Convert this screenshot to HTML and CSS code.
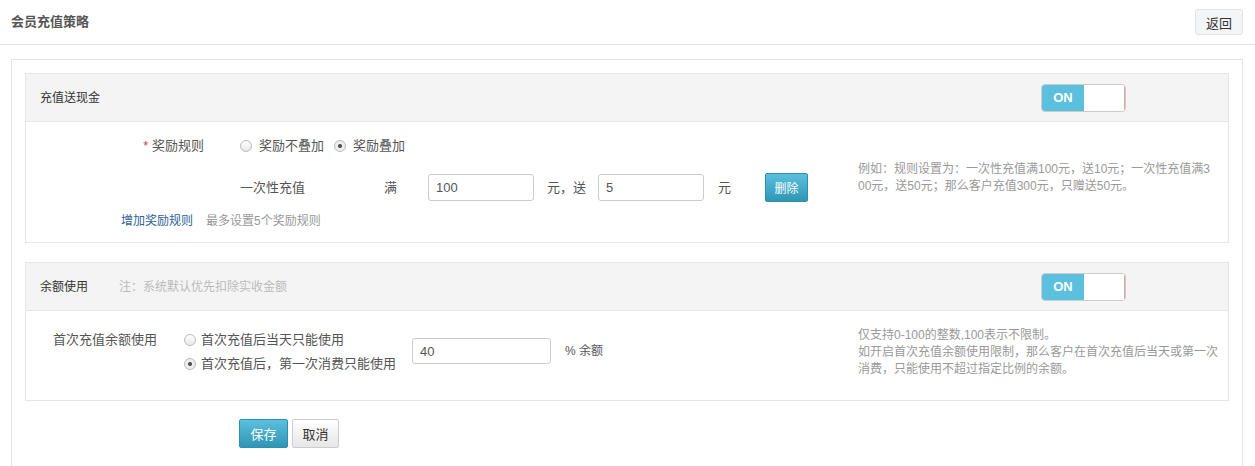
FILE: index.html
```html
<!DOCTYPE html>
<html lang="zh-CN">
<head>
    <meta charset="UTF-8">
    <title>会员充值策略</title>
    <link rel="stylesheet" href="styles.css">
</head>
<body>
    <div class="page-header">
        <h1 class="page-title">会员充值策略</h1>
        <button class="btn-back">返回</button>
    </div>

    <div class="panel">
        <!-- 充值送现金 -->
        <div class="card">
            <div class="card-header">
                <span class="card-title">充值送现金</span>
                <div class="switch"><span class="switch-on">ON</span><span class="switch-off"></span></div>
            </div>
            <div class="card-body">
                <div class="form-area">
                    <div class="row row-rule">
                        <label class="rule-label"><em>*</em> 奖励规则</label>
                        <label class="radio"><i></i>奖励不叠加</label>
                        <label class="radio checked"><i></i>奖励叠加</label>
                    </div>
                    <div class="row row-item">
                        <span class="item-name">一次性充值</span>
                        <span class="item-full">满</span>
                        <input class="input input-amount" type="text" value="100">
                        <span class="item-text">元，送</span>
                        <input class="input input-amount" type="text" value="5">
                        <span class="item-unit">元</span>
                        <button class="btn btn-primary btn-delete">删除</button>
                    </div>
                    <div class="row row-add">
                        <a class="link-add">增加奖励规则</a>
                        <span class="hint">最多设置5个奖励规则</span>
                    </div>
                </div>
                <div class="tip tip-rule">例如：规则设置为：一次性充值满100元，送10元；一次性充值满300元，送50元；那么客户充值300元，只赠送50元。</div>
            </div>
        </div>

        <!-- 余额使用 -->
        <div class="card">
            <div class="card-header">
                <span class="card-title">余额使用</span>
                <span class="card-note">注：系统默认优先扣除实收金额</span>
                <div class="switch"><span class="switch-on">ON</span><span class="switch-off"></span></div>
            </div>
            <div class="card-body">
                <div class="form-area balance-area">
                    <label class="balance-label">首次充值余额使用</label>
                    <div class="radio-list">
                        <label class="radio"><i></i>首次充值后当天只能使用</label>
                        <label class="radio checked"><i></i>首次充值后，第一次消费只能使用</label>
                    </div>
                    <input class="input input-percent" type="text" value="40">
                    <span class="percent-unit">% 余额</span>
                </div>
                <div class="tip tip-balance">
                    <div>仅支持0-100的整数,100表示不限制。</div>
                    <div>如开启首次充值余额使用限制，那么客户在首次充值后当天或第一次消费，只能使用不超过指定比例的余额。</div>
                </div>
            </div>
        </div>

        <div class="actions">
            <button class="btn btn-primary btn-save">保存</button>
            <button class="btn btn-default btn-cancel">取消</button>
        </div>
    </div>
</body>
</html>
```

FILE: styles.css
```css
/* Reset */
body, h1, div, span, button, input, label, a {
    margin: 0;
    padding: 0;
    font-family: "Liberation Sans", "Noto Sans CJK SC", sans-serif;
    box-sizing: border-box;
}

body {
    background-color: #ffffff;
    color: #555;
    font-size: 13px;
    line-height: 20px;
}

/* Page header */
.page-header {
    height: 45px;
    padding: 0 12px 0 11px;
    display: flex;
    align-items: center;
    justify-content: space-between;
    border-bottom: 1px solid #e5e5e5;
}

.page-title {
    font-size: 13px;
    font-weight: bold;
    color: #555;
    line-height: 20px;
    margin-top: -1px;
}

.btn-back {
    width: 48px;
    height: 26px;
    font-size: 13px;
    color: #333;
    background-color: #f4f5f7;
    border: 1px solid #e1e2e5;
    border-radius: 3px;
}

/* Outer panel */
.panel {
    margin: 14px 12px 0 11px;
    padding: 13px 13px 20px;
    border: 1px solid #e5e5e5;
    border-bottom: none;
}

/* Cards */
.card {
    border: 1px solid #e6e6e6;
    margin-bottom: 19px;
}

.card-header {
    height: 48px;
    display: flex;
    align-items: center;
    padding-left: 14px;
    background-color: #f4f4f4;
    border-bottom: 1px solid #e6e6e6;
}

.card-title {
    font-size: 12px;
    color: #333;
}

.card-note {
    font-size: 12px;
    color: #bbb;
    margin-left: 31px;
}

/* Switch */
.switch {
    margin-left: auto;
    margin-right: 102px;
    width: 85px;
    height: 28px;
    display: flex;
    border: 1px solid #ccc;
    border-radius: 4px;
    overflow: hidden;
}

.switch-on {
    width: 42px;
    background-color: #5bc0de;
    color: #fff;
    font-size: 13px;
    font-weight: bold;
    line-height: 26px;
    text-align: center;
}

.switch-off {
    flex: 1;
    background-color: #fff;
    border-right: 1px solid #e3a5a3;
}

/* Card body */
.card-body {
    display: flex;
}

.form-area {
    width: 832px;
}

.row {
    display: flex;
    align-items: center;
}

.row-rule {
    margin-top: 12px;
    height: 24px;
}

.rule-label {
    width: 178px;
    text-align: right;
    margin-right: 36px;
}

.rule-label em {
    font-style: normal;
    color: #e4393c;
}

.radio {
    display: inline-flex;
    align-items: center;
    color: #555;
}

.radio i {
    width: 10px;
    height: 10px;
    border: 1px solid #bbb;
    border-radius: 50%;
    background: linear-gradient(#ffffff, #e8e8e8);
    margin-right: 7px;
}

.radio.checked i {
    background: radial-gradient(circle, #555 0, #555 1.6px, #eee 2.4px);
}

.row-rule .radio + .radio {
    margin-left: 10px;
}

.row-item {
    margin-top: 15px;
    height: 29px;
    padding-left: 214px;
}

.item-name {
    width: 144px;
}

.item-full {
    width: 44px;
}

.input {
    height: 27px;
    border: 1px solid #ccc;
    border-radius: 3px;
    padding: 0 7px;
    font-size: 13px;
    color: #555;
    background-color: #fff;
}

.input-amount {
    width: 106px;
}

.item-text {
    margin: 0 12px 0 13px;
}

.item-unit {
    margin-left: 14px;
    margin-right: 34px;
}

/* Buttons */
.btn {
    height: 29px;
    font-size: 13px;
    border-radius: 2px;
}

.btn-primary {
    color: #fff;
    background: linear-gradient(#5bc0de, #2f96b4);
    border: 1px solid #2f8fae;
}

.btn-default {
    color: #333;
    background: linear-gradient(#ffffff, #e6e6e6);
    border: 1px solid #ccc;
}

.btn-delete {
    width: 43px;
    font-size: 12px;
}

.row-add {
    margin-top: 9px;
    margin-bottom: 11px;
    padding-left: 95px;
    font-size: 12px;
}

.link-add {
    color: #2d6494;
    margin-right: 13px;
}

.hint {
    color: #999;
}

/* Tips on the right */
.tip {
    width: 355px;
    font-size: 12px;
    line-height: 17px;
    color: #999;
    word-break: break-all;
}

.tip-rule {
    margin-top: 39px;
}

.tip-balance {
    width: 364px;
    margin-top: 16px;
}

/* Balance row */
.balance-area {
    display: flex;
    align-items: flex-start;
    padding-top: 17px;
    padding-bottom: 24px;
}

.balance-label {
    width: 131px;
    text-align: right;
    line-height: 24px;
    margin-right: 27px;
}

.radio-list {
    width: 228px;
    display: flex;
    flex-direction: column;
}

.radio-list .radio {
    line-height: 24px;
}

.radio-list .radio i {
    margin-right: 5px;
}

.input-percent {
    width: 139px;
    height: 26px;
    margin-top: 10px;
}

.percent-unit {
    margin-left: 14px;
    margin-top: 13px;
    font-size: 12px;
}

/* Actions */
.actions {
    display: flex;
    padding-left: 214px;
    margin-top: -1px;
}

.btn-save {
    width: 49px;
}

.btn-cancel {
    width: 47px;
    margin-left: 4px;
}
```
